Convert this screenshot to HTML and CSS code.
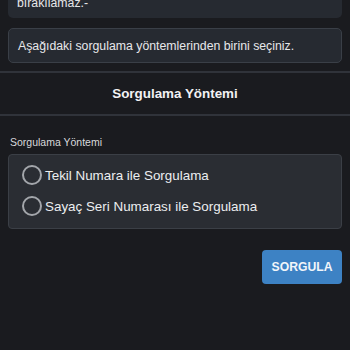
FILE: index.html
```html
<!DOCTYPE html>
<html lang="tr">
<head>
<meta charset="utf-8">
<link rel="stylesheet" href="styles.css">
</head>
<body>
<div class="page">
  <div class="note note-top">bırakılamaz.-</div>
  <div class="note note-info">Aşağıdaki sorgulama yöntemlerinden birini seçiniz.</div>
  <div class="section-title">Sorgulama Yöntemi</div>
  <div class="field">
    <div class="field-label">Sorgulama Yöntemi</div>
    <div class="options">
      <label class="option"><span class="radio"></span>Tekil Numara ile Sorgulama</label>
      <label class="option"><span class="radio"></span>Sayaç Seri Numarası ile Sorgulama</label>
    </div>
  </div>
  <div class="actions">
    <button class="btn">SORGULA</button>
  </div>
</div>
</body>
</html>
```
FILE: styles.css
```css
html, body {
  margin: 0;
  padding: 0;
  background: #1a1b1f;
  width: 350px;
  height: 350px;
  overflow: hidden;
}
.page {
  font-family: "Liberation Sans", Arial, sans-serif;
  color: #e6e7ea;
  display: flex;
  flex-direction: column;
}
.note {
  margin: 0 8px;
  border-radius: 5px;
  background: #262a31;
  font-size: 12.3px;
  box-sizing: border-box;
}
.note-top {
  height: 18px;
  padding: 0 9px 10px;
  line-height: 10px;
  border-radius: 0 0 5px 5px;
  overflow: hidden;
  display: flex;
  align-items: flex-end;
}
.note-info {
  margin-top: 10px;
  height: 35px;
  border: 1px solid #3a3f47;
  padding: 0 9px;
  display: flex;
  align-items: center;
}
.section-title {
  margin-top: 8px;
  border-top: 2px solid #30333a;
  border-bottom: 2px solid #30333a;
  height: 41px;
  display: flex;
  align-items: center;
  justify-content: center;
  font-weight: bold;
  font-size: 13.4px;
  color: #f2f2f4;
}
.field {
  margin: 19px 8px 0;
}
.field-label {
  font-size: 10.5px;
  color: #d8d9dc;
  padding-left: 2px;
  height: 14px;
  line-height: 14px;
}
.options {
  margin-top: 5px;
  background: #2a2d33;
  border: 1px solid #3b3f46;
  border-radius: 4px;
  height: 75px;
  box-sizing: border-box;
  padding: 10px 13px 0;
  display: flex;
  flex-direction: column;
  gap: 11px;
}
.option {
  display: flex;
  align-items: center;
  gap: 3px;
  font-size: 13.4px;
  color: #eceef0;
  height: 20px;
}
.radio {
  width: 16px;
  height: 16px;
  border: 2px solid #a3a6ab;
  border-radius: 50%;
  flex: none;
}
.actions {
  display: flex;
  justify-content: flex-end;
  margin: 21px 8px 0;
}
.btn {
  width: 80px;
  height: 34px;
  border: none;
  border-radius: 4px;
  background: #3d82c4;
  color: #f1f5fa;
  font-family: "Liberation Sans", Arial, sans-serif;
  font-weight: bold;
  font-size: 12.2px;
  padding: 0;
}
```
